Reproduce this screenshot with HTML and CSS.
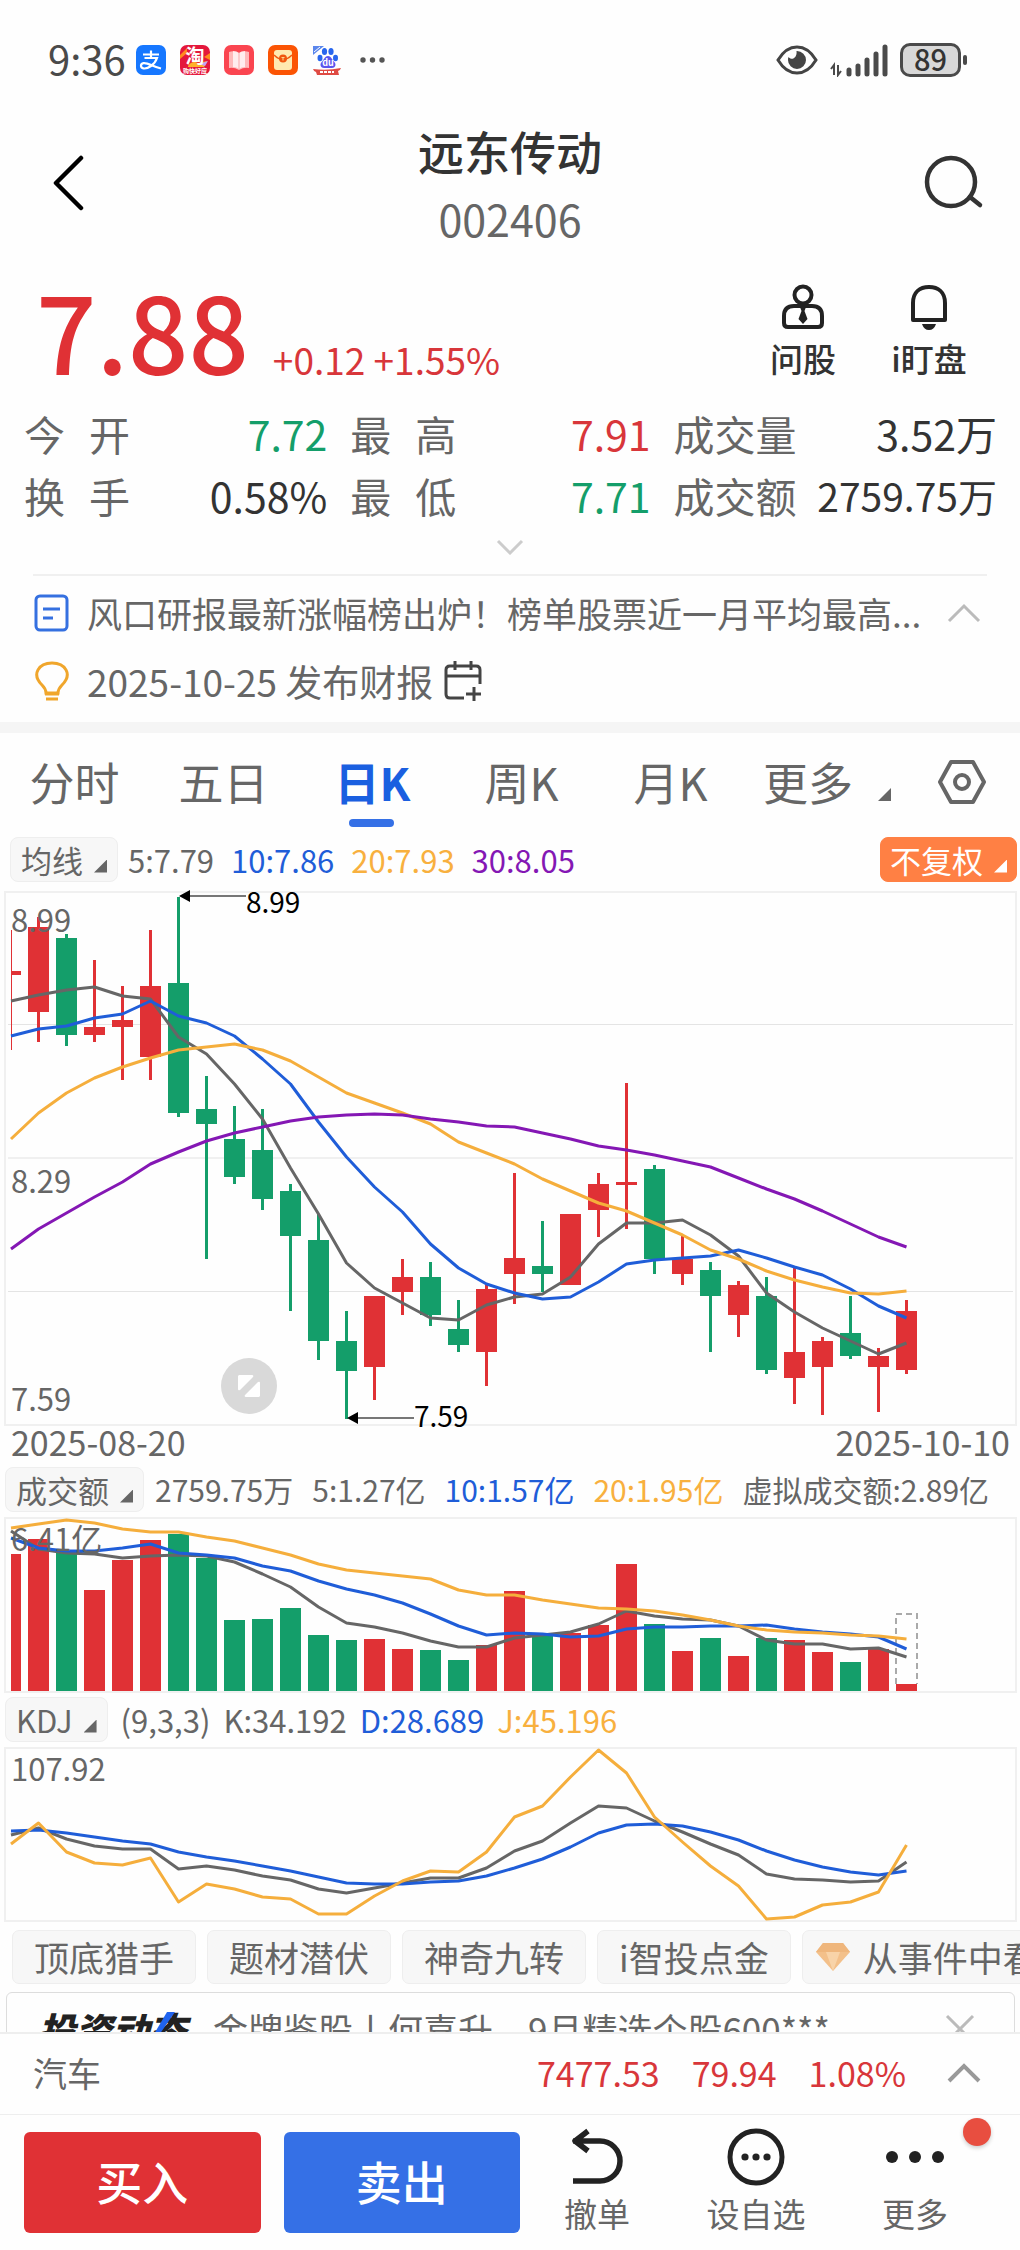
FILE: index.html
```html
<!DOCTYPE html>
<html lang="zh-CN">
<head>
<meta charset="utf-8">
<meta name="viewport" content="width=device-width, initial-scale=1">
<title>远东传动 002406</title>
<link rel="stylesheet" href="styles.css">
</head>
<body>
<div class="app">
  <main class="content">
    <div class="status">
      <span class="clock">9:36</span>
      <svg class="app-icon" viewBox="0 0 30 30"><rect width="30" height="30" rx="7" fill="#1677ff"/><path d="M7 9.500h16M15 5.500v7.500M8.500 13h12.500c-1.200 3.600-3.200 6-6 8-2.600 1.800-5 2.800-7.500 2.400-3.400-.7-3.300-4.600 0-5.300 4-.8 9.500 3.600 17.500 5.400" fill="none" stroke="#fff" stroke-width="2.200"/></svg>
      <svg class="app-icon" viewBox="0 0 30 30"><rect width="30" height="30" rx="7" fill="#e4173c"/><path d="M0 10 7 3v5l-7 6zM30 8l-6 4 6 3z" fill="#ff8a1f"/><path d="M8 21q4-6 10-3l9-2-3 6H8z" fill="#ffb12b"/><path d="M19 19l9-3-3 5z" fill="#c4a2f5"/><text x="15" y="18" text-anchor="middle" class="icon-tao">淘</text><text x="15" y="28" text-anchor="middle" class="icon-tiny">购快好应</text></svg>
      <svg class="app-icon" viewBox="0 0 30 30"><rect width="30" height="30" rx="7" fill="#fa4550"/><path d="M5 7q5-2 10 1 5-3 10-1v16q-5-1-10 2-5-3-10-2z" fill="#ffb9ba"/><path d="M9 6q4 0 6 2 2-2 6-2v16q-4 0-6 2-2-2-6-2z" fill="#fff" fill-opacity=".75"/><path d="M15 8v16" stroke="#f9a9ab"/></svg>
      <svg class="app-icon" viewBox="0 0 30 30"><rect width="30" height="30" rx="7" fill="#fb5404"/><rect x="6" y="5" width="18" height="20" rx="3" fill="#ffe9b0"/><path d="M6 10q9 9 18 0" fill="none" stroke="#f05a12" stroke-width="1.500"/><circle cx="15" cy="13.500" r="4" fill="#f0560f"/><path d="M13.500 12.500h3M15 12.500v3" stroke="#ffd68b"/></svg>
      <svg class="app-icon" viewBox="0 0 30 30"><path d="M1 10V1h11z" fill="#5a86ec"/><path d="M2 7 8 2" stroke="#fff"/><g fill="#2866ee"><ellipse cx="12.500" cy="6.500" rx="2.600" ry="3.500"/><ellipse cx="19" cy="6.500" rx="2.600" ry="3.500"/><ellipse cx="8" cy="13" rx="2.500" ry="3.200"/><ellipse cx="23.500" cy="13" rx="2.500" ry="3.200"/></g><path d="M16 11c3 0 4 3.500 6 5.500 3 3 1 6.500-2 6.500h-8c-3 0-5-3.500-2-6.500 2-2 3-5.500 6-5.500z" fill="#5a55ee"/><text x="16" y="21" text-anchor="middle" class="icon-du">du</text><path d="M1 24q14 2 28-1-1 3-3 3l1 4H5l-1-3q-2 0-3-3z" fill="#df4a43"/><path d="M8 27h14" stroke="#fff" stroke-width="2" stroke-dasharray="3 1"/></svg>
      <svg class="dots" viewBox="0 0 26 8"><g fill="#555"><circle cx="4" cy="4" r="2.700"/><circle cx="13.500" cy="4" r="2.700"/><circle cx="23" cy="4" r="2.700"/></g></svg>
      <svg class="eye" viewBox="0 0 42 30"><path d="M2 15C8 5 14 2 21 2s13 3 19 13c-6 10-12 13-19 13S8 25 2 15z" fill="none" stroke="#444" stroke-width="3"/><path d="M21 6a9 9 0 1 1-9 9c0-1 0-2 .5-3 3 4 9 1 8-6z" fill="#444"/></svg>
      <svg class="signal" viewBox="0 0 58 34"><g stroke="#4a4a4a" stroke-width="5" stroke-linecap="round"><path d="M19 27v4M28 23v8M37 17v14M46 11v20M55 4v27"/></g><path d="M4 32V22l-3 4M8 22v10l3-4" fill="none" stroke="#4a4a4a" stroke-width="2"/></svg>
      <span class="battery">89</span>
    </div>

    <header class="top">
      <button class="icon-btn" aria-label="返回"><svg width="34" height="56" viewBox="0 0 34 56"><path d="M29 3 4 28l25 25" fill="none" stroke="#000" stroke-width="4.500" stroke-linecap="round" stroke-linejoin="round"/></svg></button>
      <div class="names"><h1>远东传动</h1><p>002406</p></div>
      <button class="icon-btn end" aria-label="搜索"><svg width="60" height="56" viewBox="0 0 60 56"><circle cx="27" cy="27" r="24" fill="none" stroke="#333" stroke-width="4.500"/><path d="m46 42 10 8" stroke="#333" stroke-width="4.500" stroke-linecap="round"/></svg></button>
    </header>

    <section class="quote">
      <strong class="price">7.88</strong>
      <span class="change">+0.12 +1.55%</span>
      <button class="tool"><svg width="44" height="46" viewBox="0 0 44 46"><g fill="none" stroke="#222" stroke-width="4"><circle cx="22" cy="11" r="8.500"/><path d="M7 43h30q4 0 4-4v-7q0-10-10-10H13Q3 22 3 32v7q0 4 4 4z"/></g><path d="M19 23h6l-1.500 4 3 8-4.500 5-4.500-5 3-8z" fill="#222"/></svg>问股</button>
      <button class="tool"><svg width="44" height="46" viewBox="0 0 44 46"><path d="M6 36V19C6 8 13 3 22 3s16 5 16 16v17z" fill="none" stroke="#222" stroke-width="4" stroke-linejoin="round"/><path d="M15 40h14q-2 6-7 6t-7-6z" fill="#222"/></svg>i盯盘</button>
    </section>

    <dl class="stats">
      <div><dt class="spread">今 开</dt><dd class="down">7.72</dd></div>
      <div><dt class="spread">最 高</dt><dd class="up">7.91</dd></div>
      <div><dt>成交量</dt><dd>3.52万</dd></div>
      <div><dt class="spread">换 手</dt><dd>0.58%</dd></div>
      <div><dt class="spread">最 低</dt><dd class="down">7.71</dd></div>
      <div><dt>成交额</dt><dd class="long">2759.75万</dd></div>
    </dl>
    <button class="expand" aria-label="展开"><svg width="28" height="16" viewBox="0 0 28 16"><path d="m2 2 12 12L26 2" fill="none" stroke="#ccc" stroke-width="3"/></svg></button>

    <section class="notices">
      <a class="notice" href="#">
        <svg width="36" height="40" viewBox="0 0 36 40"><rect x="3" y="3" width="31" height="34" rx="4" fill="none" stroke="#3570e0" stroke-width="3"/><path d="M10 16h17M10 25h10" stroke="#3570e0" stroke-width="3"/></svg>
        <span class="notice-text">风口研报最新涨幅榜出炉！榜单股票近一月平均最高...</span>
        <svg width="36" height="22" viewBox="0 0 36 22"><path d="M3 19 18 4l15 15" fill="none" stroke="#bbb" stroke-width="3"/></svg>
      </a>
      <a class="notice" href="#">
        <svg width="36" height="40" viewBox="0 0 36 40"><path d="M13 32q0-4-4-8C-2 13 6 2 19 2s21 11 10 22q-4 4-4 8z" fill="none" stroke="#f0a62c" stroke-width="3"/><path d="M12 33h14M13 38h12" stroke="#f0a62c" stroke-width="3"/></svg>
        <span class="date">2025-10-25 发布财报</span>
        <svg width="38" height="40" viewBox="0 0 38 40"><path d="M20 37H6q-4 0-4-4V9q0-4 4-4h26q4 0 4 4v14M2 15h34M11 0v9M27 0v9M22 33h15M30 26v14" fill="none" stroke="#444" stroke-width="3"/></svg>
      </a>
    </section>

    <nav class="tabs">
      <a href="#">分时</a><a href="#">五日</a><a href="#" class="active">日K</a><a href="#">周K</a><a href="#">月K</a><a href="#" class="more">更多<i class="corner"></i></a>
      <button class="icon-btn" aria-label="设置"><svg width="50" height="46" viewBox="0 0 50 46"><path d="M14 3h22l11 20-11 20H14L3 23z" fill="none" stroke="#666" stroke-width="4" stroke-linejoin="round"/><circle cx="25" cy="23" r="7" fill="none" stroke="#666" stroke-width="4"/></svg></button>
    </nav>

    <div class="legend averages">
      <button class="pill">均线<i class="corner"></i></button>
      <span>5:7.79</span><span class="c-blue">10:7.86</span><span class="c-orange">20:7.93</span><span class="c-purple">30:8.05</span>
      <button class="pill adjust">不复权<i class="corner"></i></button>
    </div>
    <svg class="chart" id="candles" viewBox="0 882 1020 585">
      <g fill="none" stroke="#f0f0f0" stroke-width="2"><rect x="5" y="892" width="1011" height="533"/><path d="M8 1158h1005"/><path d="M8 1024.500h1005M8 1291.500h1005" stroke="#e4e4e4" stroke-width="1"/></g>
      <g class="plot"></g>
      <g class="axis"><text x="11" y="932">8.99</text><text x="11" y="1193">8.29</text><text x="11" y="1411">7.59</text></g>
      <g class="mark"><path d="M190 896h56M358 1418h56" stroke="#777" stroke-width="2"/><path d="m179 896 11-6v12zM347 1418l11-6v12z"/><text x="246" y="913">8.99</text><text x="414" y="1427">7.59</text></g>
      <circle cx="249" cy="1386" r="28" fill="#d9d9d9"/><path d="M239 1375h13q2 0 1 2l-13 13q-2 1-2-1v-13zM259 1397h-13q-2 0-1-2l13-13q2-1 2 1v13z" fill="#fff"/>
      <g class="axis day"><text x="11" y="1456">2025-08-20</text><text x="1010" y="1456" text-anchor="end">2025-10-10</text></g>
    </svg>

    <div class="legend turnover">
      <button class="pill">成交额<i class="corner"></i></button>
      <span>2759.75万</span><span>5:1.27亿</span><span class="c-blue">10:1.57亿</span><span class="c-orange">20:1.95亿</span><span>虚拟成交额:2.89亿</span>
    </div>
    <svg class="chart" id="volume" viewBox="0 1512 1020 185">
      <rect x="5" y="1518" width="1011" height="174" fill="none" stroke="#f0f0f0" stroke-width="2"/>
      <g class="plot"></g>
      <g class="axis"><text x="11" y="1551">6.41亿</text></g>
    </svg>

    <div class="legend oscillator">
      <button class="pill">KDJ<i class="corner"></i></button>
      <span>(9,3,3)</span><span>K:34.192</span><span class="c-blue">D:28.689</span><span class="c-orange">J:45.196</span>
    </div>
    <svg class="chart" id="kdj" viewBox="0 1742 1020 188">
      <rect x="5" y="1748" width="1011" height="173" fill="none" stroke="#f0f0f0" stroke-width="2"/>
      <g class="plot"></g>
      <g class="axis"><text x="11" y="1781">107.92</text></g>
    </svg>

    <div class="chips">
      <button>顶底猎手</button><button>题材潜伏</button><button>神奇九转</button><button>i智投点金</button>
      <button class="gem"><svg width="34" height="30" viewBox="0 0 34 30"><path d="M7 1h20l7 9-17 19L0 10z" fill="#f3c08a"/><path d="M7 1h20l7 9H0z" fill="#efb67c"/><path d="m10 10 7 19 7-19z" fill="#f8d3a8"/></svg>从事件中看</button>
    </div>

    <article class="news">
      <span class="news-logo">投资动态<svg width="30" height="34" viewBox="0 0 30 34"><path d="M20 0h8L10 26 0 34z" fill="#1f63ef"/></svg></span>
      <span class="news-text">金牌鉴股丨何喜升，9月精选个股600***</span>
      <button class="icon-btn" aria-label="关闭"><svg width="32" height="32" viewBox="0 0 32 32"><path d="m3 3 26 26M29 3 3 29" stroke="#bbb" stroke-width="3"/></svg></button>
    </article>
  </main>

  <footer>
    <a class="sector" href="#">
      <span class="sector-name">汽车</span><span>7477.53</span><span>79.94</span><span>1.08%</span>
      <svg width="36" height="22" viewBox="0 0 36 22"><path d="M3 19 18 4l15 15" fill="none" stroke="#999" stroke-width="4"/></svg>
    </a>
    <div class="actions">
      <button class="trade buy">买入</button>
      <button class="trade sell">卖出</button>
      <button class="act"><svg width="60" height="60" viewBox="0 0 60 60"><path d="M6 14h27a20 20 0 0 1 0 40H6M21 4 8 14l13 10" fill="none" stroke="#222" stroke-width="5.500" stroke-linejoin="round"/></svg>撤单</button>
      <button class="act wide"><svg width="60" height="60" viewBox="0 0 60 60"><circle cx="30" cy="30" r="26" fill="none" stroke="#222" stroke-width="5"/><g fill="#222"><circle cx="19" cy="30" r="3.600"/><circle cx="30" cy="30" r="3.600"/><circle cx="41" cy="30" r="3.600"/></g></svg>设自选</button>
      <button class="act"><svg width="60" height="60" viewBox="0 0 60 60"><g fill="#222"><circle cx="7" cy="30" r="6"/><circle cx="30" cy="30" r="6"/><circle cx="53" cy="30" r="6"/></g></svg>更多<i class="badge"></i></button>
    </div>
  </footer>
</div>
<script src="chart.js"></script>
</body>
</html>
```
FILE: styles.css
```css
* { box-sizing: border-box; }
body, h1, p, dl, dd { margin: 0; }
body {
  background: #fefefe;
  color: #333;
  font-family: "Noto Sans CJK SC", sans-serif;
}
button {
  margin: 0;
  padding: 0;
  border: 0;
  background: none;
  color: inherit;
  font: inherit;
  white-space: nowrap;
}
a { color: inherit; text-decoration: none; }
svg { display: block; flex: none; }

.app { display: flex; flex-direction: column; height: 100vh; }
.content { flex: 1; min-height: 0; overflow: hidden auto; scrollbar-width: none; }

.status { display: flex; align-items: center; height: 84px; padding: 36px 59px 0 48px; }
.clock { width: 88px; padding-bottom: 4px; color: #4a4a4a; font-size: 40px; line-height: 40px; }
.app-icon { width: 30px; height: 30px; margin-right: 14px; overflow: visible; }
.icon-tao { fill: #fff; font-size: 19px; font-weight: 700; }
.icon-tiny { fill: #fff; font-size: 6px; font-weight: 700; }
.icon-du { fill: #fff; font-size: 9px; font-weight: 700; }
.dots { width: 26px; height: 8px; margin-left: 3px; }
.eye { width: 42px; height: 30px; margin-left: auto; }
.signal { width: 58px; height: 34px; margin: 0 12px; }
.battery {
  position: relative;
  width: 61px;
  height: 34px;
  border: 3px solid #4a4a4a;
  border-radius: 10px;
  background: #d8d8d8;
  color: #333;
  font-size: 29px;
  font-weight: 500;
  line-height: 25px;
  text-align: center;
}
.battery::after {
  content: "";
  position: absolute;
  right: -9px;
  top: 9px;
  width: 4px;
  height: 10px;
  border-radius: 2px;
  background: #4a4a4a;
}

.top { display: grid; grid-template-columns: 1fr auto 1fr; align-items: center; padding: 34px 36px 0 52px; }
.names { padding-right: 16px; text-align: center; }
.names h1 { font-size: 46px; font-weight: 500; line-height: 64px; }
.names p { margin-top: 6px; color: #666; font-size: 43px; line-height: 60px; }
.icon-btn { display: flex; }
.icon-btn.end { justify-self: end; }

.quote { display: flex; align-items: flex-end; height: 143px; padding: 0 53px 0 36px; }
.price { padding-bottom: 8px; color: #e03135; font-size: 106px; font-weight: 500; line-height: 108px; }
.change { flex: 1; margin-left: 24px; padding-bottom: 6px; color: #d8363a; font-size: 37px; line-height: 52px; }
.tool { display: flex; flex-direction: column; align-items: center; width: 76px; margin-left: 50px; padding-bottom: 9px; font-size: 33px; font-weight: 500; line-height: 48px; }
.tool svg { margin-bottom: 4px; }

.stats { display: grid; grid-template-columns: 302fr 299fr 322fr; column-gap: 23px; padding: 11px 23px 0 24px; }
.stats div { display: flex; justify-content: space-between; height: 62px; font-size: 41px; line-height: 62px; white-space: nowrap; }
.stats dt { color: #666; }
.stats .spread { width: 106px; text-align-last: justify; }
.stats .long { font-size: 39px; }
.stats .up { color: #d8363a; }
.stats .down { color: #149e6a; }
.expand { display: block; margin: 13px auto 19px; }

.notices { margin: 0 33px; padding: 3px 0 7px; border-top: 2px solid #f0f0f0; }
.notice { display: flex; align-items: center; height: 68px; color: #666; font-size: 35px; line-height: 50px; white-space: nowrap; }
.notice-text { flex: 1; margin-left: 18px; }
.notice:first-child svg:last-child { margin-right: 5px; }
.date { margin: 0 11px 0 18px; font-size: 37px; }

.tabs { display: flex; align-items: center; height: 115px; padding: 0 33px 6px 0; border-top: 11px solid #f5f5f5; color: #666; font-size: 45px; line-height: 98px; white-space: nowrap; }
.tabs a { position: relative; flex: 149; text-align: center; }
.tabs .active { color: #1a5fe0; font-weight: 700; }
.tabs .active::after { content: ""; position: absolute; left: calc(50% - 24px); bottom: 4px; width: 45px; height: 8px; border-radius: 4px; background: #3570e6; }
.tabs .more { flex: 174; padding-left: 18px; text-align: left; }
.tabs .more .corner { margin-left: 25px; }
.corner { display: inline-block; width: 13px; height: 13px; margin-left: 11px; background: currentColor; clip-path: polygon(100% 0, 100% 100%, 0 100%); }

.legend { display: flex; align-items: center; height: 45px; padding: 0 3px 0 5px; color: #666; font-size: 31px; line-height: 45px; white-space: nowrap; }
.legend .pill { height: 45px; padding: 0 10px; border: 1px solid #eee; border-radius: 8px; background: #f7f7f7; line-height: 40px; }
.averages { gap: 17px; padding-left: 10px; }
.averages .pill { margin-right: -7px; }
.turnover { gap: 19px; }
.turnover span { font-size: 30px; }
.turnover .pill { margin-right: -8px; }
.oscillator { gap: 13px; }
.legend .adjust { margin-left: auto; margin-right: 0; padding: 0 9px; border-color: #ff8044; background: #ff8044; color: #fff; }
.c-blue { color: #1f5dd8; }
.c-orange { color: #f8b03e; }
.c-purple { color: #8417b4; }

.chart { width: 100%; height: auto; }
.axis { fill: #666; font-size: 31px; }
.day { font-size: 34px; }
.mark { fill: #000; font-size: 28px; }

.chips { display: flex; gap: 11px; height: 54px; padding-left: 12px; overflow: hidden; }
.chips button { flex: none; padding: 0 21px; border: 1px solid #eee; border-radius: 7px; background: #f7f7f7; color: #666; font-size: 35px; line-height: 50px; }
.chips .gem { display: flex; align-items: center; gap: 13px; padding-left: 13px; }

.news { display: flex; align-items: center; height: 74px; margin: 8px 5px 0 6px; padding: 0 38px 0 31px; border: 1px solid #ddd; border-radius: 6px; color: #666; font-size: 35px; line-height: 50px; white-space: nowrap; }
.news-logo { position: relative; width: 175px; color: #222; font-size: 37px; font-style: italic; font-weight: 900; }
.news-logo svg { position: absolute; left: 109px; top: 8px; }
.news-text { flex: 1; }

.sector { display: flex; align-items: center; gap: 32px; height: 83px; padding: 0 38px 2px 33px; border-top: 2px solid #eee; border-bottom: 1px solid #eee; color: #d8363a; font-size: 34px; line-height: 50px; }
.sector-name { flex: 1; color: #666; }
.sector svg { margin-left: 8px; }
.actions { display: flex; align-items: flex-start; height: 135px; padding: 17px 34px 0 24px; }
.trade { flex: 1; height: 101px; margin-right: 23px; padding-bottom: 6px; border-radius: 6px; color: #fff; font-size: 46px; font-weight: 500; }
.buy { background: #e03135; }
.sell { background: #3570e6; }
.act { position: relative; display: flex; flex-direction: column; align-items: center; width: 66px; margin: -5px 38px 0; color: #666; font-size: 33px; line-height: 48px; }
.act:nth-child(3) { margin-left: 21px; }
.act.wide { width: 100px; }
.act svg { margin-bottom: 2px; }
.badge { position: absolute; right: -43px; top: -9px; width: 28px; height: 28px; border-radius: 50%; background: #e84e40; box-shadow: 0 2px 4px rgba(0, 0, 0, .2); }
```
FILE: chart.js
```js
const NS = 'http://www.w3.org/2000/svg';
const RED = '#e03135', GREEN = '#149e6a';
const LEFT = 11, STEP = 28, HALF = 10.5;
const xAt = i => HALF + STEP * i;

function add(parent, tag, attrs) {
  const el = document.createElementNS(NS, tag);
  for (const k in attrs) el.setAttribute(k, attrs[k]);
  parent.appendChild(el);
}
function bar(g, i, w, top, bottom, fill) {
  const x = Math.max(LEFT, xAt(i) - w / 2);
  add(g, 'rect', { x, y: top, width: xAt(i) + w / 2 - x, height: bottom - top, fill });
}
function line(g, ys, stroke) {
  const d = ys.map((y, i) => Math.max(LEFT, xAt(i)) + ',' + y).join(' ');
  add(g, 'polyline', { points: d, fill: 'none', stroke, 'stroke-width': 3, 'stroke-linejoin': 'round' });
}

// [wick top, wick bottom, body top, body bottom]; colour comes from `falls`
const candles = [
  [930,1050,971,975],[917,1042,927,1012],[934,1046,938,1035],[960,1042,1027,1035],[986,1080,1020,1027],
  [930,1080,986,1057],[897,1117,983,1113],[1076,1259,1109,1124],[1106,1184,1139,1177],[1109,1210,1150,1199],
  [1184,1311,1191,1236],[1214,1360,1240,1341],[1311,1419,1341,1371],[1296,1400,1296,1367],[1259,1315,1277,1292],
  [1262,1326,1277,1315],[1300,1352,1329,1345],[1285,1386,1289,1352],[1173,1304,1258,1274],[1221,1292,1266,1274],
  [1214,1285,1214,1285],[1173,1237,1184,1210],[1083,1229,1182,1185],[1165,1274,1169,1259],[1236,1285,1259,1274],
  [1262,1352,1270,1296],[1281,1337,1285,1315],[1277,1374,1296,1370],[1267,1404,1352,1378],[1337,1415,1341,1367],
  [1296,1359,1333,1356],[1348,1412,1356,1367],[1300,1374,1311,1370]
];
const falls = new Set([2,6,7,8,9,10,11,12,15,16,19,23,25,27,30]);
const color = i => falls.has(i) ? GREEN : RED;

const price = document.querySelector('#candles .plot');
candles.forEach(([t, b, o, c], i) => { bar(price, i, 3, t, b, color(i)); bar(price, i, 21, o, c, color(i)); });
line(price, [1001,995,990,987,996,999,1037,1054,1084,1119,1168,1214,1263,1288,1303,1318,1320,1305,1297,1294,1277,1244,1223,1223,1220,1235,1256,1293,1312,1328,1341,1354,1343], '#666');
line(price, [1036,1029,1026,1018,1014,1001,1016,1023,1036,1059,1084,1122,1157,1187,1212,1244,1268,1284,1293,1299,1297,1282,1264,1260,1258,1256,1250,1258,1267,1275,1289,1306,1318], '#1f5dd8');
line(price, [1139,1113,1093,1078,1067,1058,1050,1047,1044,1050,1061,1077,1093,1103,1113,1124,1142,1153,1164,1179,1191,1203,1211,1223,1235,1250,1259,1271,1280,1287,1293,1294,1291], '#f5ae3c');
line(price, [1249,1229,1213,1197,1182,1164,1152,1141,1133,1127,1121,1117,1115,1114,1115,1119,1122,1126,1127,1133,1139,1146,1150,1155,1161,1167,1178,1189,1199,1211,1224,1237,1247], '#8417b4');

const volume = document.querySelector('#volume .plot');
[1554,1539,1551,1590,1560,1540,1534,1558,1620,1619,1608,1635,1640,1639,1649,1650,1660,1645,1591,1635,1633,1625,1564,1624,1651,1638,1656,1638,1640,1652,1662,1649,1684]
  .forEach((top, i) => bar(volume, i, 21, top, 1691, color(i)));
add(volume, 'path', { d: 'M896 1684V1614h21v70', fill: 'none', stroke: '#aaa', 'stroke-width': 2, 'stroke-dasharray': '6 4' });
line(volume, [1531,1549,1553,1554,1558,1556,1555,1556,1562,1574,1587,1607,1623,1627,1633,1641,1647,1647,1638,1635,1632,1624,1611,1616,1619,1620,1626,1640,1644,1644,1649,1648,1657], '#666');
line(volume, [1538,1548,1551,1551,1548,1544,1553,1555,1558,1566,1571,1581,1589,1595,1603,1614,1626,1635,1633,1634,1637,1636,1629,1627,1627,1626,1626,1625,1629,1632,1634,1637,1649], '#1f5dd8');
line(volume, [1528,1524,1520,1523,1529,1532,1532,1537,1541,1548,1555,1564,1570,1573,1576,1579,1590,1595,1595,1600,1604,1608,1609,1611,1615,1620,1626,1630,1632,1633,1635,1636,1639], '#f5ae3c');

const kdj = document.querySelector('#kdj .plot');
line(kdj, [1835,1828,1839,1846,1849,1849,1869,1866,1870,1876,1880,1889,1893,1888,1883,1878,1878,1868,1851,1841,1823,1806,1808,1821,1832,1844,1855,1874,1879,1880,1882,1881,1862], '#666');
line(kdj, [1831,1830,1833,1837,1841,1844,1852,1857,1861,1866,1871,1877,1883,1884,1884,1882,1881,1876,1868,1859,1847,1833,1825,1824,1826,1832,1840,1851,1860,1867,1872,1875,1871], '#1f5dd8');
line(kdj, [1844,1823,1852,1863,1865,1858,1902,1884,1889,1897,1899,1914,1914,1896,1881,1871,1872,1852,1817,1806,1777,1750,1773,1817,1842,1866,1886,1919,1917,1905,1902,1892,1845], '#f5ae3c');
```
